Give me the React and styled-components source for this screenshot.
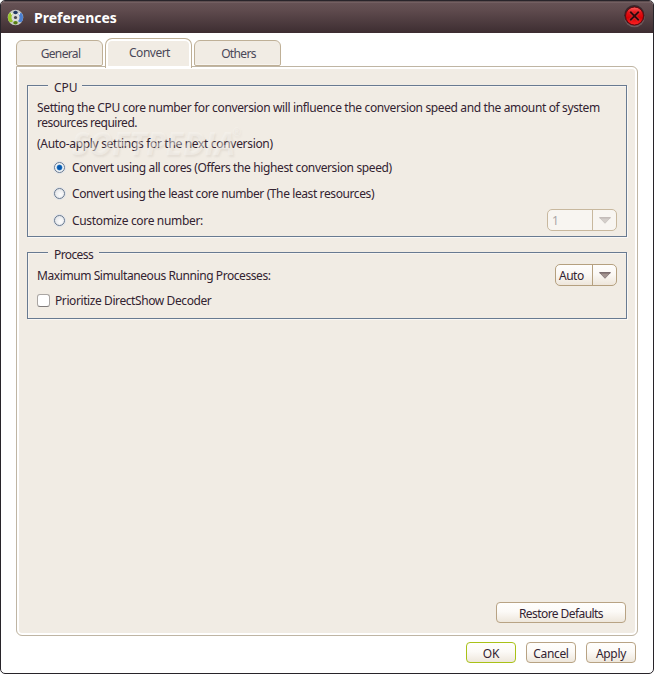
import React from 'react';
import styled, { createGlobalStyle } from 'styled-components';

const GlobalStyle = createGlobalStyle`
  * { box-sizing: border-box; }
  body { margin: 0; background: #fff; overflow: hidden; }
  button { font: inherit; color: inherit; }
`;

const Window = styled.main`
  width: 654px;
  height: 674px;
  display: flex;
  flex-direction: column;
  background: #fff;
  border: 1px solid #28242a;
  border-radius: 5px;
  overflow: hidden;
  font: 12px/15px 'Noto Sans', 'Open Sans', sans-serif;
  color: #332331;
`;

const TitleBar = styled.header`
  flex: none;
  height: 32px;
  display: flex;
  align-items: center;
  padding: 0 8px 0 6px;
  background: linear-gradient(#3d3133 0, #806c6e 1px, #665255 2px, #5f4b4e 9px, #3d2d31 100%);
`;

const Title = styled.h1`
  flex: 1;
  margin: 2px 0 0 10px;
  font: bold 14px/20px 'Noto Sans', sans-serif;
  letter-spacing: 0;
  color: #fff;
`;

const CloseButton = styled.button`
  display: flex;
  padding: 0;
  margin-top: -2px;
  border: 0;
  background: none;
`;

const TabBar = styled.nav`
  flex: none;
  height: 33px;
  display: flex;
  align-items: flex-end;
  gap: 2px;
  padding-left: 15px;
`;

const Tab = styled.button`
  width: 87px;
  height: ${(p) => (p.$active ? 30 : 26)}px;
  margin-bottom: ${(p) => (p.$active ? -2 : 0)}px;
  padding: 0 0 ${(p) => (p.$active ? 3 : 0)}px 2px;
  position: relative;
  z-index: ${(p) => (p.$active ? 1 : 0)};
  border: 1px solid #bfb097;
  border-radius: ${(p) => (p.$active ? '7px 7px 0 0' : '6px 6px 2px 2px')};
  ${(p) => p.$active && 'border-bottom: 0;'}
  background: #f1ece4;
  box-shadow: ${(p) => (p.$active ? 'inset 0 0 0 2px #fff' : 'inset 0 -1px 0 #f7f4ef')};
  color: #4b4858;
  letter-spacing: ${(p) => p.$ls || 0}px;
`;

const Panel = styled.section`
  flex: none;
  width: 622px;
  height: 570px;
  margin-left: 15px;
  display: flex;
  flex-direction: column;
  align-items: flex-start;
  position: relative;
  padding: 18px 10px 12px;
  border: 1px solid #bfb5a3;
  border-radius: 0 6px 6px 6px;
  background: #f1ece4;
  box-shadow: inset 0 0 0 2px #fff;
`;

const Group = styled.section`
  width: 600px;
  height: ${(p) => p.$h}px;
  margin-bottom: 15px;
  position: relative;
  display: flex;
  flex-direction: column;
  border: 1px solid #687a91;
  box-shadow: 1px 1px 0 #faf8f5, inset 1px 1px 0 #f7f4f0;
  padding: ${(p) => p.$pt}px 9px 0;
`;

const Legend = styled.h2`
  position: absolute;
  left: 20px;
  top: -6px;
  width: ${(p) => p.$w}px;
  margin: 0;
  padding-left: 6px;
  background: #f1ece4;
  font: inherit;
  letter-spacing: ${(p) => p.$ls || 0}px;
`;

const Line = styled.span`
  display: block;
  white-space: nowrap;
  letter-spacing: ${(p) => p.$ls || 0}px;
`;

const Note = styled(Line)`
  margin-top: 6px;
`;

const Options = styled.div`
  display: grid;
  grid-template-rows: 26px 26px 28px;
  margin: 3px 0 0 17px;
`;

const OptionRow = styled.div`
  display: flex;
  align-items: center;
`;

const Option = styled.label`
  display: flex;
  align-items: center;
  flex: 1;
`;

const Radio = styled.i`
  width: 11px;
  height: 11px;
  margin: 0 7px 0 0;
  border: 1px solid #687a91;
  border-radius: 50%;
  background: ${(p) =>
    p.$on
      ? 'radial-gradient(circle, #0758ad 0 1.8px, #2a7cc6 2.5px, #f3f5f7 3.3px)'
      : 'radial-gradient(circle at 60% 60%, #fdfdfd, #dcdee2)'};
  box-shadow: 0 0 0 1px #dfe2e8;
`;

const Check = styled.i`
  width: 13px;
  height: 13px;
  margin-right: 5px;
  border: 1px solid #aaa6a3;
  border-bottom-color: #7f7b7a;
  border-radius: 3px;
  background: #fff;
`;

const Select = styled.div`
  width: ${(p) => p.$w}px;
  height: 22px;
  display: flex;
  border: 1px solid ${(p) => (p.$disabled ? '#c8b89e' : '#b5a07f')};
  border-radius: 5px;
  background: ${(p) => (p.$disabled ? '#f8f5f1' : 'linear-gradient(#fefdfc, #fbf8f4 45%, #eee6db)')};
  ${(p) => p.$disabled && 'color: #aaa5a7;'}
`;

const SelectValue = styled.span`
  flex: 1;
  padding: 3px 0 0 ${(p) => p.$pl}px;
  letter-spacing: ${(p) => p.$ls || 0}px;
`;

const SelectArrow = styled.span`
  width: 24px;
  display: flex;
  justify-content: center;
  padding-top: 7px;
  border-left: 1px solid ${(p) => (p.$disabled ? '#c8b89e' : '#b5a07f')};
`;

const SettingRow = styled.div`
  display: flex;
  justify-content: space-between;
  align-items: center;
  height: 22px;
`;

const CheckRow = styled.label`
  display: flex;
  align-items: center;
  height: 16px;
  margin-top: 6px;
`;

const Button = styled.button`
  width: ${(p) => p.$w || 50}px;
  height: 21px;
  padding: 2px 0 0;
  display: flex;
  justify-content: center;
  align-items: center;
  border: 1px solid ${(p) => (p.$primary ? '#a9c117' : '#b8a384')};
  border-radius: 4px;
  background: linear-gradient(#fffefd, #fcfaf7 45%, #eee7dc);
  letter-spacing: ${(p) => p.$ls || 0}px;
  white-space: nowrap;
`;

const RestoreSlot = styled.div`
  margin: auto 1px 0 auto;
`;

const Footer = styled.footer`
  display: flex;
  justify-content: flex-end;
  gap: 10px;
  padding: 6px 17px 0 0;
`;

const Watermark = styled.div`
  position: absolute;
  left: 44px;
  top: 39px;
  font: bold italic 32px/35px 'Open Sans', 'Noto Sans', sans-serif;
  color: rgba(249, 247, 243, 0.42);
  text-shadow: 1px 2px 2px rgba(165, 155, 145, 0.16);
  pointer-events: none;
  white-space: nowrap;
`;

const Reg = styled.span`
  position: absolute;
  top: 1px;
  right: -6px;
  font: 10px/12px 'Open Sans', sans-serif;
`;

function AppIcon() {
  return (
    <svg width="17" height="17" viewBox="0 0 17 17">
      <circle cx="8.5" cy="8.5" r="7.8" fill="#c9cdc9" />
      <ellipse cx="3.8" cy="8.5" rx="2.8" ry="4.7" fill="#99c42b" />
      <ellipse cx="13.2" cy="8.5" rx="2.8" ry="4.7" fill="#4b7fd1" />
      <circle cx="8.5" cy="8.5" r="4" fill="#d9dbd9" />
      <ellipse cx="8.5" cy="3.5" rx="2.2" ry="1.7" fill="#223a63" />
      <ellipse cx="8.5" cy="13.7" rx="2.2" ry="1.8" fill="#587e13" />
      <circle cx="4.8" cy="4.7" r="1" fill="#eef2e0" />
      <circle cx="12.2" cy="4.7" r="1" fill="#eef2f6" />
      <circle cx="8.5" cy="8.5" r="1.6" fill="#4a494f" />
    </svg>
  );
}

function CloseIcon() {
  return (
    <svg width="22" height="24" viewBox="0 0 22 24">
      <defs>
        <linearGradient id="red" x2="0" y2="1">
          <stop stopColor="#ff6666" />
          <stop offset=".3" stopColor="#e51216" />
          <stop offset=".6" stopColor="#d90004" />
          <stop offset="1" stopColor="#ff2527" />
        </linearGradient>
      </defs>
      <circle cx="11.5" cy="12.8" r="10.4" fill="#6d595c" />
      <circle cx="11.3" cy="11.2" r="10.2" fill="#38272c" />
      <circle cx="11.5" cy="12" r="9" fill="url(#red)" stroke="#68060b" />
      <path d="M7.2 7.7l8.6 8.6m0-8.6l-8.6 8.6" stroke="#e8383b" strokeWidth="3.2" />
      <path d="M7.2 7.7l8.6 8.6m0-8.6l-8.6 8.6" stroke="#35070b" strokeWidth="2" />
    </svg>
  );
}

function Arrow({ disabled }) {
  return (
    <svg width="12" height="7" viewBox="0 0 12 7">
      <path d="M.5.5h11L6 6.3z" fill={disabled ? '#d4ceca' : '#a3938f'} />
      <path d="M.5.8h11" stroke={disabled ? '#b5adaa' : '#57474a'} />
      <path d="M.5.5L6 6.3 11.5.5" fill="none" stroke={disabled ? '#c2bbb7' : '#75666a'} strokeWidth=".7" />
    </svg>
  );
}

export default function App() {
  return (
    <>
      <GlobalStyle />
      <Window>
        <TitleBar>
          <AppIcon />
          <Title>Preferences</Title>
          <CloseButton aria-label="Close"><CloseIcon /></CloseButton>
        </TitleBar>
        <TabBar>
          <Tab $ls={-0.65}>General</Tab>
          <Tab $active $ls={-0.5}>Convert</Tab>
          <Tab $ls={-0.65}>Others</Tab>
        </TabBar>
        <Panel>
          <Group $h={152} $pt={14}>
            <Legend $w={34}>CPU</Legend>
            <Line $ls={-0.365}>Setting the CPU core number for conversion will influence the conversion speed and the amount of system</Line>
            <Line $ls={-0.5}>resources required.</Line>
            <Note $ls={-0.32}>(Auto-apply settings for the next conversion)</Note>
            <Options>
              <OptionRow>
                <Option><Radio $on /><Line $ls={-0.37}>Convert using all cores (Offers the highest conversion speed)</Line></Option>
              </OptionRow>
              <OptionRow>
                <Option><Radio /><Line $ls={-0.4}>Convert using the least core number (The least resources)</Line></Option>
              </OptionRow>
              <OptionRow>
                <Option><Radio /><Line $ls={-0.33}>Customize core number:</Line></Option>
                <Select $w={70} $disabled>
                  <SelectValue $pl={4}>1</SelectValue>
                  <SelectArrow $disabled><Arrow disabled /></SelectArrow>
                </Select>
              </OptionRow>
            </Options>
            <Watermark>SOFTPEDIA<Reg>®</Reg></Watermark>
          </Group>
          <Group $h={67} $pt={11}>
            <Legend $w={51} $ls={-0.6}>Process</Legend>
            <SettingRow>
              <Line $ls={-0.42}>Maximum Simultaneous Running Processes:</Line>
              <Select $w={62}>
                <SelectValue $pl={3} $ls={-0.5}>Auto</SelectValue>
                <SelectArrow><Arrow /></SelectArrow>
              </Select>
            </SettingRow>
            <CheckRow><Check /><Line $ls={-0.41}>Prioritize DirectShow Decoder</Line></CheckRow>
          </Group>
          <RestoreSlot><Button $w={130} $ls={-0.57}>Restore Defaults</Button></RestoreSlot>
        </Panel>
        <Footer>
          <Button $primary $ls={-0.2}>OK</Button>
          <Button $ls={-0.35}>Cancel</Button>
          <Button $ls={-0.3}>Apply</Button>
        </Footer>
      </Window>
    </>
  );
}
